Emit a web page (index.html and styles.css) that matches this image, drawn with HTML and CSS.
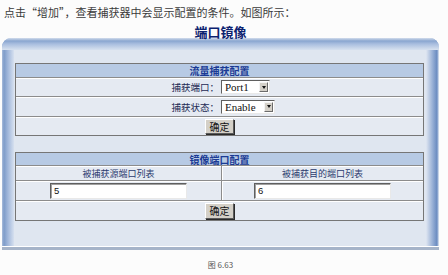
FILE: index.html
```html
<!DOCTYPE html>
<html lang="zh">
<head>
<meta charset="utf-8">
<title>端口镜像</title>
<link rel="stylesheet" href="styles.css">
</head>
<body>
<p class="intro">点击“增加”，查看捕获器中会显示配置的条件。如图所示：</p>
<div class="title">端口镜像</div>
<div class="panel">
  <div class="tbl t1">
    <div class="hdr">流量捕获配置</div>
    <div class="row form r1">
      <span class="lbl">捕获端口：</span>
      <span class="ctl"><span class="sel w1"><span class="val">Port1</span><span class="arr"></span></span></span>
    </div>
    <div class="row form r2">
      <span class="lbl">捕获状态：</span>
      <span class="ctl"><span class="sel w2"><span class="val">Enable</span><span class="arr"></span></span></span>
    </div>
    <div class="row btnrow r3"><span class="btn">确定</span></div>
  </div>
  <div class="tbl t2">
    <div class="hdr">镜像端口配置</div>
    <div class="row cols s1">
      <div class="cell">被捕获源端口列表</div>
      <div class="cell">被捕获目的端口列表</div>
    </div>
    <div class="row cols s2">
      <div class="cell"><span class="inp">5</span></div>
      <div class="cell"><span class="inp">6</span></div>
    </div>
    <div class="row btnrow s3"><span class="btn">确定</span></div>
  </div>
</div>
<div class="caption">图 6.63</div>
</body>
</html>
```

FILE: styles.css
```css
* { box-sizing: border-box; }
body {
  margin: 0;
  background: #fcfcfc;
  font-family: "Noto Sans CJK SC", "Noto Sans", sans-serif;
}
.intro {
  margin: 0;
  height: 25px;
  padding: 5px 0 0 4px;
  font-size: 11px;
  line-height: 14px;
  color: #3a3a3a;
}
.title {
  width: 437px;
  margin-left: 2px;
  height: 13px;
  line-height: 13px;
  font-size: 13px;
  font-weight: bold;
  text-align: center;
  color: #0b2270;
}
.panel {
  width: 437px;
  height: 212px;
  margin-left: 2px;
  padding: 25px 15px 0 13px;
  border-radius: 9px 9px 0 0;
  border-bottom: 3px solid #a6b4c9;
  background:
    linear-gradient(#ffffff, #ffffff) left bottom / 100% 1px no-repeat,
    linear-gradient(to bottom, #d3ddec 0, #8aa6d0 3px, #a9bedf 6px, #d7e1ef 12px) left top / 100% 12px no-repeat,
    linear-gradient(to right, #a9bcdb 0, #7e9cc9 2px, #a2b8db 6px, #d6e0ef 12px) left top / 12px 100% no-repeat,
    linear-gradient(to left, #e6ecf5 0, #6a8bc0 2px, #93acd4 6px, #dfe6f1 13px) right top / 14px 100% no-repeat,
    #dfe6f0;
}
.tbl {
  width: 409px;
  border: 1px solid #767676;
  background: #e5eaf2;
}
.t2 { margin-top: 16px; }
.hdr {
  background: #b7cae4;
  text-align: center;
  font-size: 10px;
  font-weight: bold;
  color: #1a3a94;
  display: flex;
  align-items: center;
  justify-content: center;
}
.t1 .hdr { height: 13px; }
.t2 .hdr { height: 12px; }
.row {
  border-top: 1px solid #8c8c8c;
  box-shadow: inset 0 1px #ffffff;
}
.r1 { height: 19px; }
.r2 { height: 20px; }
.r3 { height: 19px; }
.s1 { height: 15px; }
.s2 { height: 20px; }
.s3 { height: 20px; }
.form {
  display: grid;
  grid-template-columns: 205px 1fr;
  align-items: center;
}
.lbl {
  text-align: right;
  padding-right: 2px;
  font-size: 9.5px;
  color: #1e2b55;
}
.ctl { display: flex; align-items: center; }
.sel {
  display: flex;
  align-items: center;
  justify-content: space-between;
  height: 14px;
  background: #ffffff;
  border: 1px solid;
  border-color: #5f5f5f #e9e9e9 #e9e9e9 #5f5f5f;
  padding: 0 1px 0 3px;
}
.w1 { width: 49px; }
.w2 { width: 54px; }
.val {
  font-family: "Liberation Serif", serif;
  font-size: 11px;
  line-height: 12px;
  color: #111;
}
.arr {
  width: 9px;
  height: 10px;
  background: #d4d0c8;
  border: 1px solid;
  border-color: #f4f4f4 #6c6c6c #6c6c6c #f4f4f4;
  display: flex;
  align-items: center;
  justify-content: center;
}
.arr::after {
  content: "";
  border-left: 2.5px solid transparent;
  border-right: 2.5px solid transparent;
  border-top: 3px solid #111;
}
.btnrow {
  display: flex;
  align-items: center;
  justify-content: center;
}
.btn {
  width: 29px;
  height: 16px;
  background: #d4d0c8;
  border: 1px solid;
  border-color: #ffffff #5a5a5a #5a5a5a #ffffff;
  box-shadow: 1px 1px 0 #2a2a2a;
  font-size: 10px;
  line-height: 14px;
  text-align: center;
  color: #111;
}
.t1 .btn { height: 15px; }
.cols {
  display: grid;
  grid-template-columns: 205px 1fr;
}
.cell {
  display: flex;
  align-items: center;
  justify-content: center;
  font-size: 9px;
  color: #2b3b6e;
}
.cell + .cell {
  border-left: 1px solid #8c8c8c;
  box-shadow: inset 1px 0 #ffffff;
}
.inp {
  width: 137px;
  height: 16px;
  background: #ffffff;
  border: 1px solid;
  border-color: #5f5f5f #e9e9e9 #e9e9e9 #5f5f5f;
  box-shadow: inset 1px 1px #a0a0a0;
  padding-left: 3px;
  font-family: "Liberation Sans", sans-serif;
  font-size: 9.5px;
  line-height: 14px;
  color: #111;
}
.caption {
  width: 437px;
  margin: 10px 0 0 2px;
  text-align: center;
  font-size: 8px;
  line-height: 10px;
  color: #555;
}
```
